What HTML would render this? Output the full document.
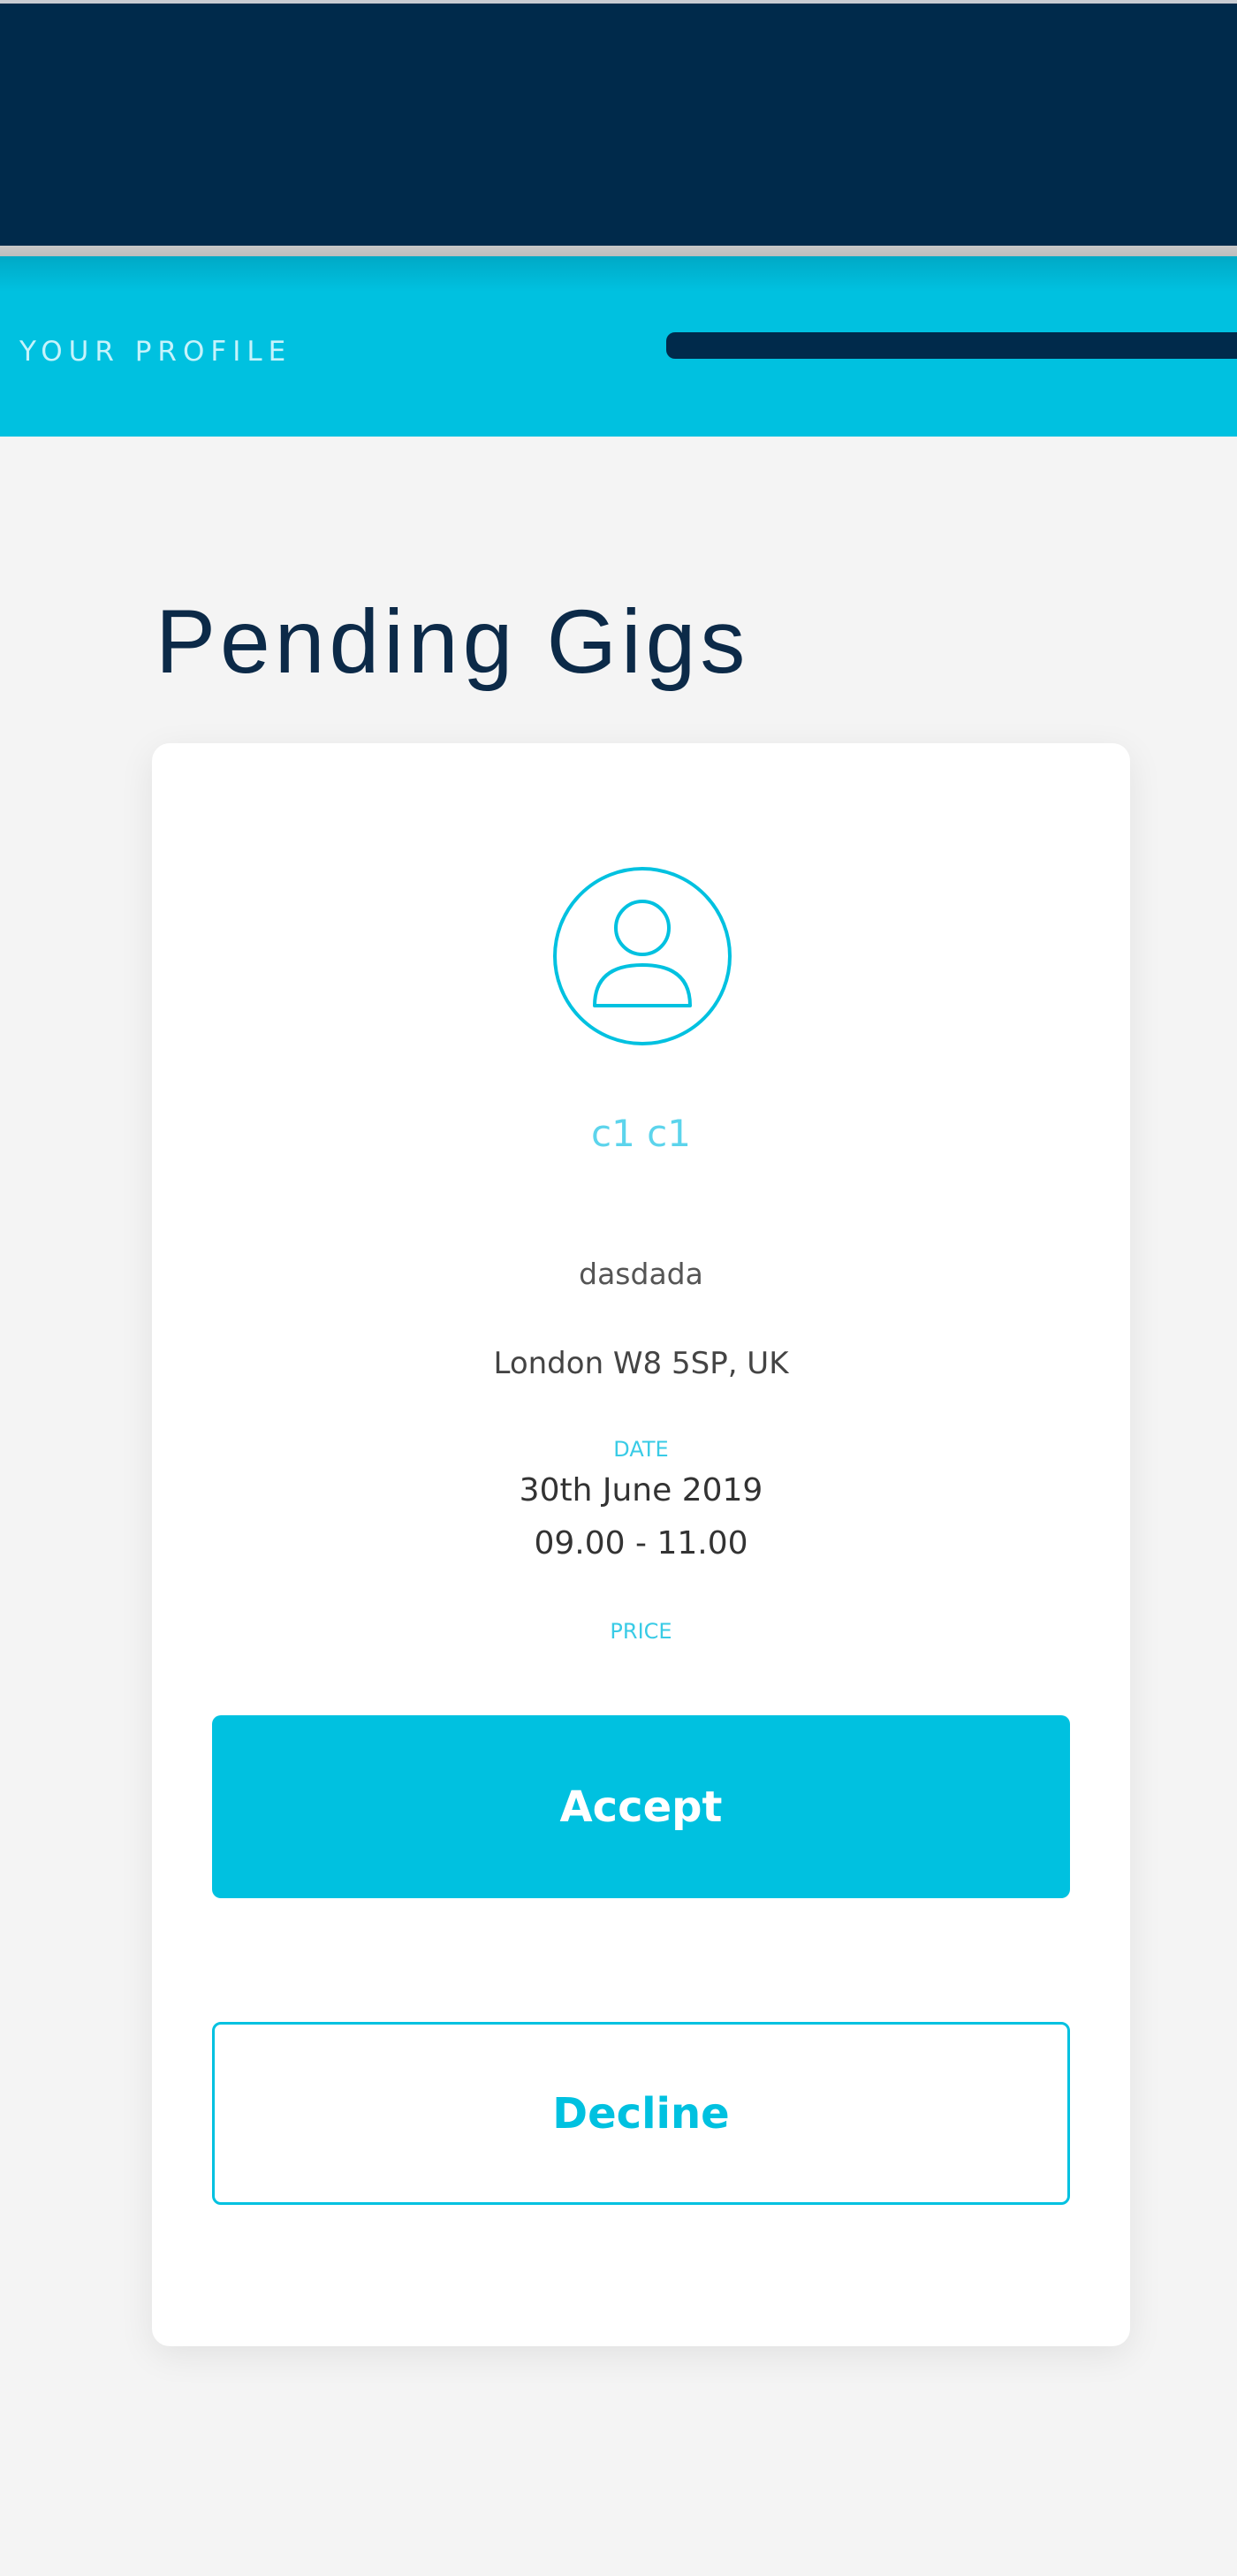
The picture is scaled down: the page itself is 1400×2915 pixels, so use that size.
<!DOCTYPE html>
<html><head><meta charset="utf-8"><style>
*{margin:0;padding:0;box-sizing:border-box}
body{width:1400px;height:2915px;background:#f4f4f4;font-family:"DejaVu Sans","Liberation Sans",sans-serif;position:relative;overflow:hidden}
.top{position:absolute;left:0;top:0;width:1400px;height:278px;background:#002a4b;border-top:4px solid #c8ccd2}
.shadow{position:absolute;left:0;top:278px;width:1400px;height:12px;background:linear-gradient(#c9c9c9,#bdbdbd)}
.cyan{position:absolute;left:0;top:290px;width:1400px;height:204px;background:linear-gradient(#00a9c6 0,#00c1e0 40px,#00c1e0)}
.yp{position:absolute;left:22px;top:380px;font-size:31px;letter-spacing:7px;color:#c6f3fb;font-family:"DejaVu Sans",sans-serif}
.bar{position:absolute;left:754px;top:376px;width:700px;height:30px;background:#002a4b;border-radius:10px}
h1{position:absolute;left:176px;top:668px;font-weight:normal;font-size:102px;color:#0c2a48;font-family:"Liberation Sans",sans-serif;letter-spacing:5px}
.card{position:absolute;left:172px;top:841px;width:1107px;height:1814px;background:#fff;border-radius:20px;box-shadow:0 10px 40px rgba(0,0,0,.08)}
.t{position:absolute;left:172px;width:1107px;text-align:center}
.btn{position:absolute;left:240px;width:971px;height:207px;border-radius:10px;display:flex;align-items:center;justify-content:center;font-weight:bold;font-size:48px}
</style></head><body>
<div class="top"></div><div class="shadow"></div><div class="cyan"></div>
<div class="yp">YOUR PROFILE</div>
<div class="bar"></div>
<h1>Pending Gigs</h1>
<div class="card"></div>
<svg style="position:absolute;left:625px;top:980px" width="204" height="204" viewBox="0 0 204 204">
<circle cx="102" cy="102" r="99" fill="none" stroke="#00c1e0" stroke-width="4"/>
<circle cx="102" cy="70" r="30" fill="none" stroke="#00c1e0" stroke-width="4"/>
<path d="M48 158 Q48 112 102 112 Q156 112 156 158 Z" fill="none" stroke="#00c1e0" stroke-width="4" stroke-linejoin="round"/>
</svg>
<div class="t" style="top:1258px;font-size:42px;color:#5cd4ec">c1 c1</div>
<div class="t" style="top:1422px;font-size:33px;color:#555">dasdada</div>
<div class="t" style="top:1523px;font-size:34px;color:#444">London W8 5SP, UK</div>
<div class="t" style="top:1626px;font-size:24px;color:#39cbe6">DATE</div>
<div class="t" style="top:1666px;font-size:36px;color:#333">30th June 2019</div>
<div class="t" style="top:1726px;font-size:36px;color:#333">09.00 - 11.00</div>
<div class="t" style="top:1832px;font-size:24px;color:#39cbe6">PRICE</div>
<div class="btn" style="top:1941px;background:#00c1e0;color:#fff">Accept</div>
<div class="btn" style="top:2288px;border:3px solid #00c1e0;color:#00c1e0;background:#fff">Decline</div>
</body></html>
